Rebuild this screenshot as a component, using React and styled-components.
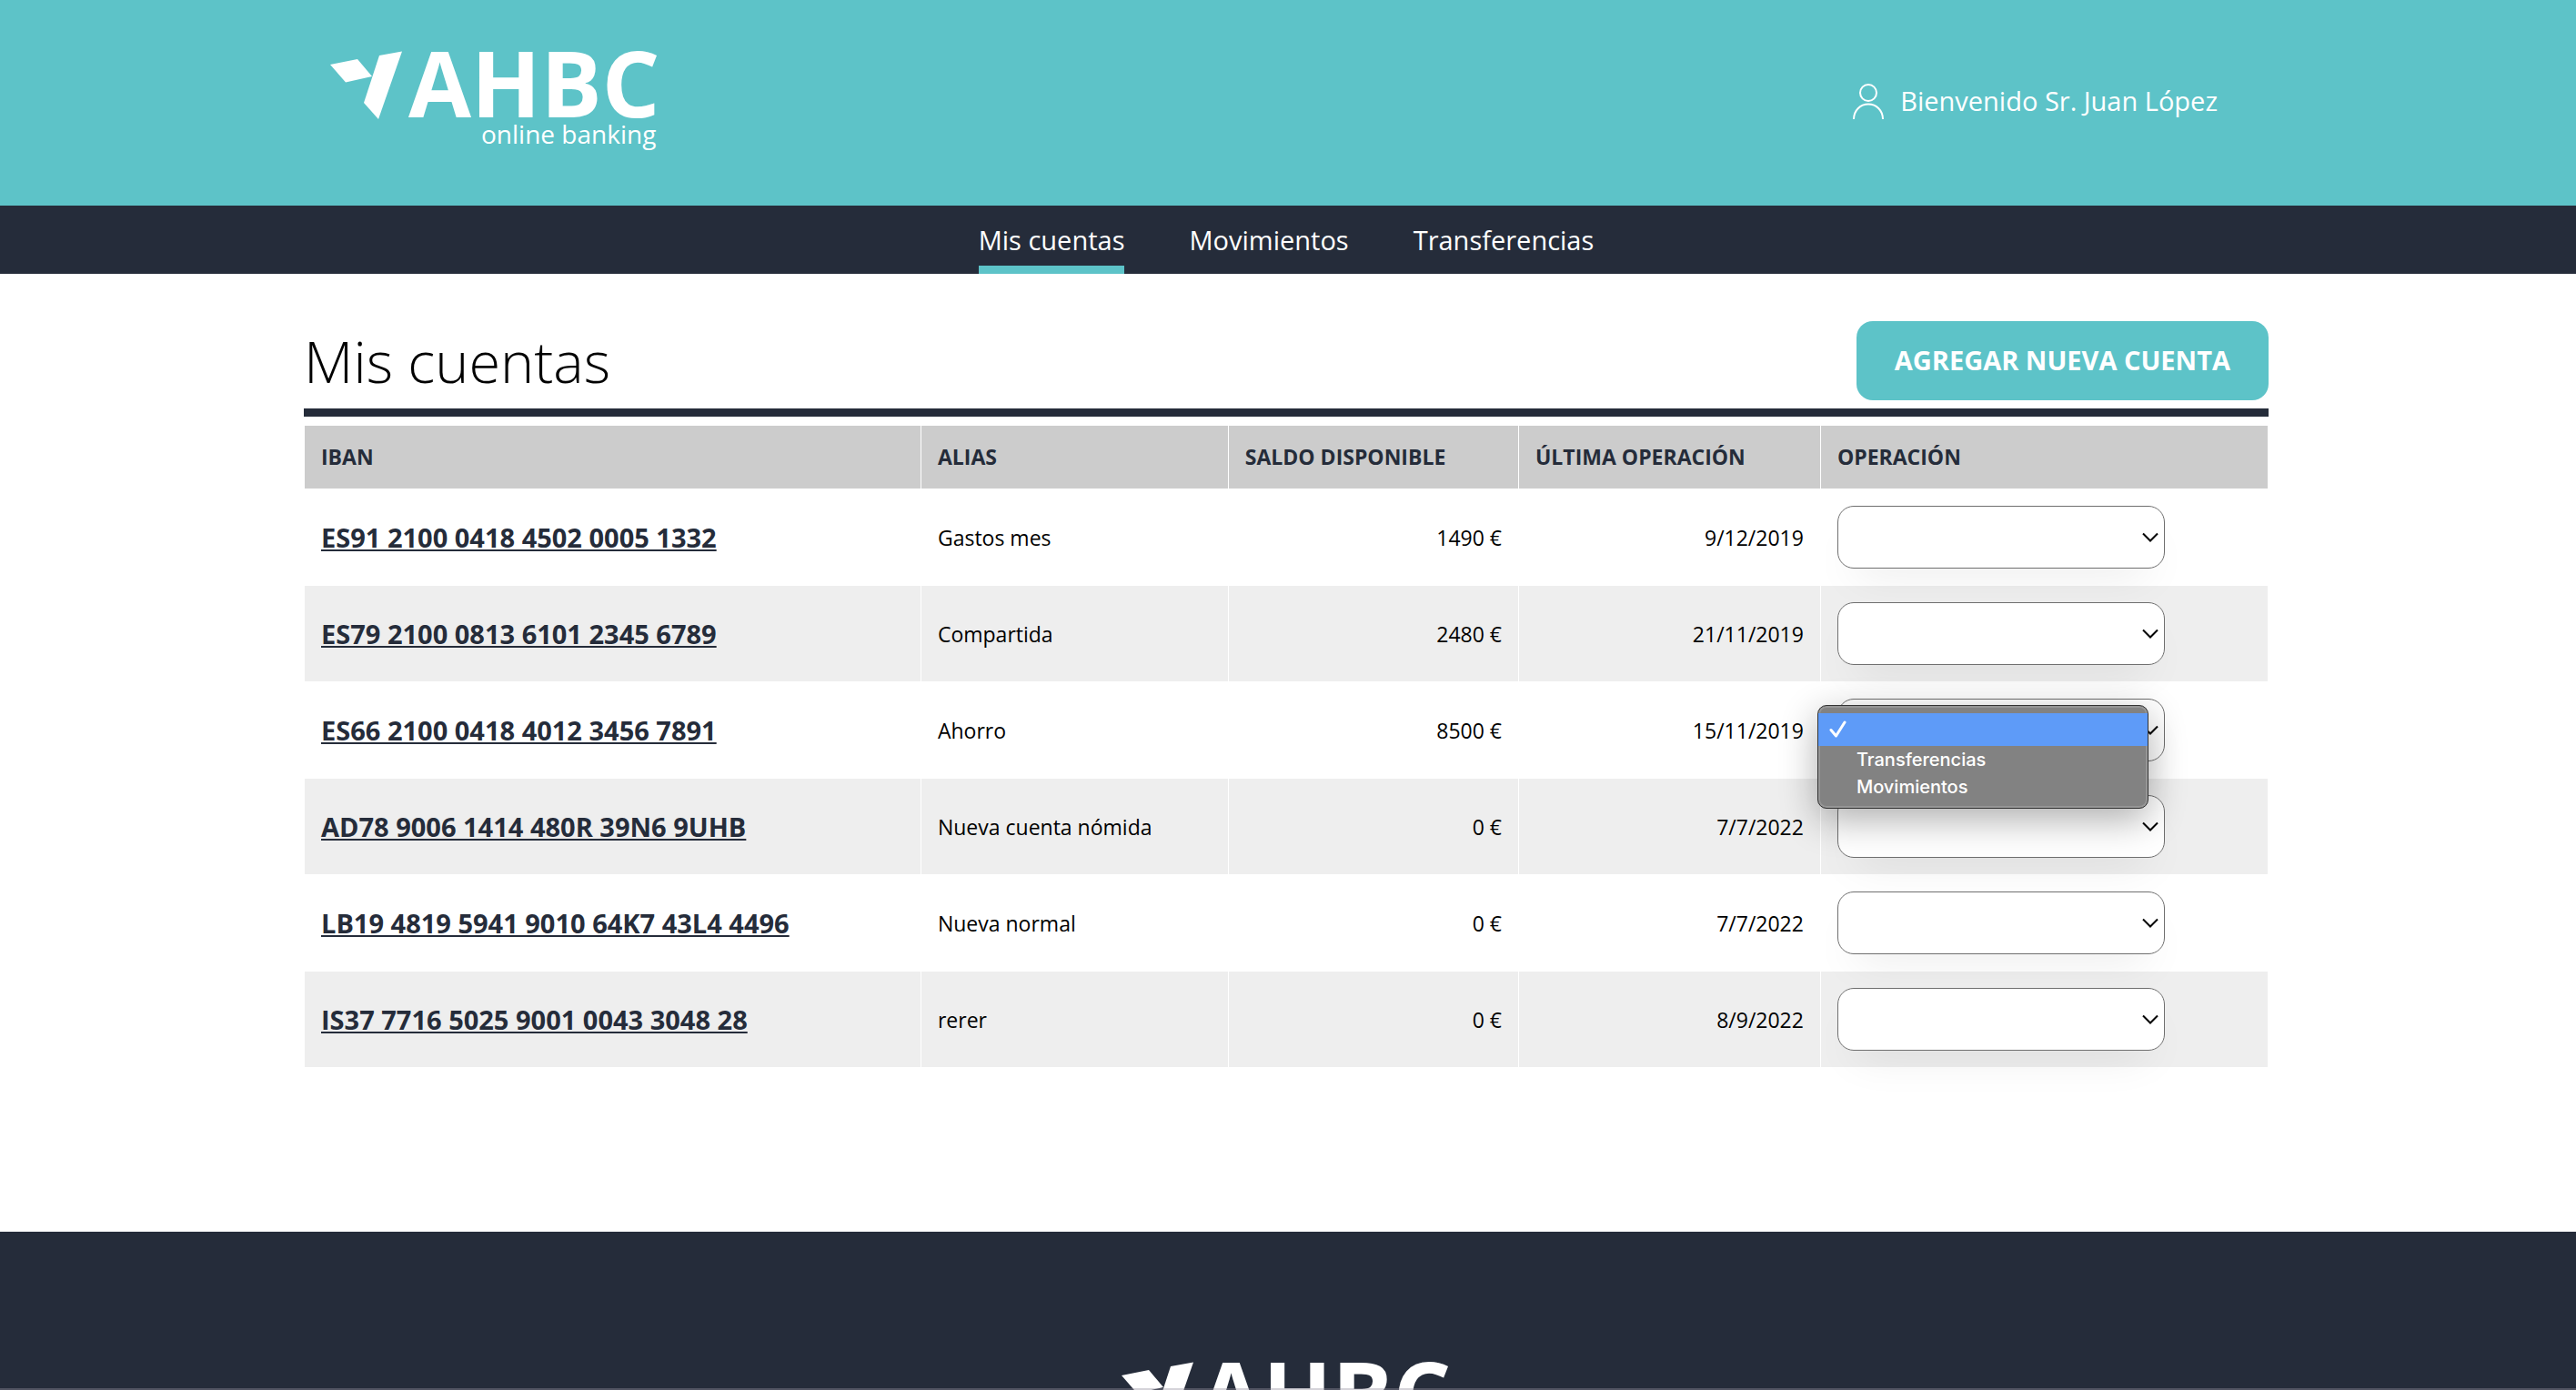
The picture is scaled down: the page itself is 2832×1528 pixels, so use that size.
import React from 'react';
import styled, { createGlobalStyle, css } from 'styled-components';

const teal = '#5dc3c8';
const navy = '#252c3a';

const GlobalStyle = createGlobalStyle`
  *, *::before, *::after { box-sizing: border-box; }
  html { overflow-x: hidden; background: #fff; }
  body {
    margin: 0;
    color: #000;
    font-family: "Open Sans", "Noto Sans", sans-serif;
    font-size: 23px;
  }
`;

const Header = styled.header`
  background: ${teal};
  height: 226px;
  padding-right: 4px;
`;

const HeaderInner = styled.div`
  max-width: 2160px;
  margin: 0 auto;
  padding: 52px 56px 0 28px;
  display: flex;
  justify-content: space-between;
  align-items: flex-start;
`;

const LogoSvg = styled.svg`
  display: block;
  flex: none;
  width: 364px;
  height: 116px;
  overflow: visible;
  fill: #fff;
  font-family: "Open Sans", "Noto Sans", sans-serif;
`;

const User = styled.div`
  display: flex;
  align-items: center;
  gap: 18px;
  padding-top: 38px;
  color: #fff;
  font-size: 29px;
  line-height: 42px;
`;

const UserIcon = styled.svg`
  width: 34px;
  height: 40px;
  fill: none;
  stroke: #fff;
  stroke-width: 2;
`;

const Nav = styled.nav`
  background: ${navy};
  height: 75px;
  padding-right: 4px;
`;

const NavList = styled.ul`
  height: 100%;
  margin: 0;
  padding: 0;
  list-style: none;
  display: flex;
  justify-content: center;
  gap: 71px;
`;

const NavLink = styled.a`
  display: block;
  height: 75px;
  padding-top: 15px;
  color: #fff;
  font-size: 29px;
  line-height: 46px;
  text-decoration: none;
  border-bottom: 9px solid ${(p) => (p.$active ? teal : 'transparent')};
`;

const Main = styled.main`
  max-width: 2164px;
  margin: 0 auto;
  padding: 52px 4px 180px 0;
`;

const TitleBar = styled.div`
  display: flex;
  justify-content: space-between;
  align-items: center;
  padding-bottom: 9px;
  border-bottom: 9px solid ${navy};
`;

const Title = styled.h1`
  margin: 0;
  font-size: 63px;
  font-weight: 300;
  line-height: 87px;
`;

const AddButton = styled.button`
  height: 87px;
  padding: 0 42px 2px;
  border: 0;
  border-radius: 18px;
  background: ${teal};
  color: #fff;
  font: 700 29px "Open Sans", "Noto Sans", sans-serif;
  text-transform: uppercase;
`;

const Table = styled.table`
  width: 100%;
  margin-top: 9px;
  border-collapse: collapse;
`;

const cell = css`
  border: 1px solid #fff;
  padding: 0 18px;
  text-align: ${(p) => (p.$end ? 'right' : 'left')};
`;

const Th = styled.th`
  ${cell}
  height: 70px;
  width: ${(p) => p.$width || 'auto'};
  padding-bottom: 1px;
  background: #ccc;
  color: ${navy};
  font-weight: 700;
`;

const Row = styled.tr`
  &:nth-child(even) { background: #eee; }
`;

const Td = styled.td`
  ${cell}
  height: 106px;
`;

const Iban = styled.a`
  color: ${navy};
  font-size: 29px;
  font-weight: 700;
  text-decoration: underline;
`;

const SelectWrap = styled.div`
  position: relative;
  width: 360px;
`;

const Select = styled.select`
  display: block;
  appearance: none;
  width: 100%;
  height: 69px;
  padding: 0 40px 0 18px;
  border: 1px solid #6f6f6f;
  border-radius: 18px;
  background: #fff;
  box-shadow: 0 24px 48px -20px rgba(0, 0, 0, 0.1);
  color: transparent;
  font: 23px "Open Sans", "Noto Sans", sans-serif;
`;

const Chevron = styled.svg`
  position: absolute;
  right: 7px;
  top: 29px;
  width: 18px;
  height: 11px;
  fill: none;
  stroke: #000;
  stroke-width: 2;
  pointer-events: none;
`;

const Menu = styled.ul`
  position: absolute;
  z-index: 2;
  left: -22px;
  top: 7px;
  width: 364px;
  margin: 0;
  padding: 8px 0;
  list-style: none;
  border: 1px solid #333;
  border-radius: 10px;
  background: #828282;
  box-shadow: inset 0 0 0 2px #969696, 0 12px 40px rgba(0, 0, 0, 0.32);
  color: #fff;
  font: 500 20px/30px Inter, "Liberation Sans", sans-serif;
`;

const MenuItem = styled.li`
  height: ${(p) => (p.$selected ? 36 : 30)}px;
  padding-left: ${(p) => (p.$selected ? 12 : 42)}px;
  background: ${(p) => (p.$selected ? '#5e9bf8' : 'transparent')};
`;

const Check = styled.svg`
  display: block;
  width: 20px;
  height: 36px;
  fill: none;
  stroke: #fff;
  stroke-width: 3;
  stroke-linecap: round;
  stroke-linejoin: round;
`;

const Footer = styled.footer`
  height: 480px;
  padding: 139px 4px 0 0;
  background: ${navy};
  display: flex;
  justify-content: center;
`;

const Viewport = styled.div`
  height: 100vh;
  overflow: hidden;

  &::after {
    content: "";
    position: fixed;
    inset: auto 0 0;
    height: 2px;
    background: rgba(150, 145, 160, 0.4);
  }
`;

const accounts = [
  { iban: 'ES91 2100 0418 4502 0005 1332', alias: 'Gastos mes', balance: '1490 €', date: '9/12/2019' },
  { iban: 'ES79 2100 0813 6101 2345 6789', alias: 'Compartida', balance: '2480 €', date: '21/11/2019' },
  { iban: 'ES66 2100 0418 4012 3456 7891', alias: 'Ahorro', balance: '8500 €', date: '15/11/2019', open: true },
  { iban: 'AD78 9006 1414 480R 39N6 9UHB', alias: 'Nueva cuenta nómida', balance: '0 €', date: '7/7/2022' },
  { iban: 'LB19 4819 5941 9010 64K7 43L4 4496', alias: 'Nueva normal', balance: '0 €', date: '7/7/2022' },
  { iban: 'IS37 7716 5025 9001 0043 3048 28', alias: 'rerer', balance: '0 €', date: '8/9/2022' },
];

function Logo() {
  return (
    <LogoSvg viewBox="0 0 364 116" role="img" aria-label="AHBC online banking">
      <polygon points="1,19 31,13 47,32 18,38.5" />
      <polygon points="55,9 80,4.5 54,79 38,61" />
      <text x="87" y="77" fontSize="100" fontWeight="700">AHBC</text>
      <text x="167" y="106" fontSize="28" fontWeight="400">online banking</text>
    </LogoSvg>
  );
}

function OperationSelect({ iban, open }) {
  return (
    <SelectWrap>
      <Select aria-label={`Operación ${iban}`} defaultValue="">
        <option value="" />
        <option value="transfer">Transferencias</option>
        <option value="moves">Movimientos</option>
      </Select>
      <Chevron viewBox="0 0 18 11" aria-hidden="true">
        <path d="M1 1.5 9 9.5 17 1.5" />
      </Chevron>
      {open && (
        <Menu>
          <MenuItem $selected>
            <Check viewBox="0 0 20 36" aria-hidden="true">
              <path d="M2 18.5 7.500 25 17 10" />
            </Check>
          </MenuItem>
          <MenuItem>Transferencias</MenuItem>
          <MenuItem>Movimientos</MenuItem>
        </Menu>
      )}
    </SelectWrap>
  );
}

export default function App() {
  return (
    <Viewport>
      <GlobalStyle />
      <Header>
        <HeaderInner>
          <Logo />
          <User>
            <UserIcon viewBox="0 0 34 40" aria-hidden="true">
              <circle cx="17" cy="11" r="9" />
              <path d="M1 40C1 30.500 8 23.500 17 23.500S33 30.500 33 40" />
            </UserIcon>
            <span>Bienvenido Sr. Juan López</span>
          </User>
        </HeaderInner>
      </Header>
      <Nav>
        <NavList>
          <li><NavLink href="#cuentas" $active>Mis cuentas</NavLink></li>
          <li><NavLink href="#movimientos">Movimientos</NavLink></li>
          <li><NavLink href="#transferencias">Transferencias</NavLink></li>
        </NavList>
      </Nav>
      <Main>
        <TitleBar>
          <Title>Mis cuentas</Title>
          <AddButton type="button">Agregar nueva cuenta</AddButton>
        </TitleBar>
        <Table>
          <thead>
            <tr>
              <Th $width="31.4%">IBAN</Th>
              <Th>ALIAS</Th>
              <Th>SALDO DISPONIBLE</Th>
              <Th>ÚLTIMA OPERACIÓN</Th>
              <Th>OPERACIÓN</Th>
            </tr>
          </thead>
          <tbody>
            {accounts.map((a) => (
              <Row key={a.iban}>
                <Td><Iban href="#movimientos">{a.iban}</Iban></Td>
                <Td>{a.alias}</Td>
                <Td $end>{a.balance}</Td>
                <Td $end>{a.date}</Td>
                <Td><OperationSelect iban={a.iban} open={a.open} /></Td>
              </Row>
            ))}
          </tbody>
        </Table>
      </Main>
      <Footer>
        <Logo />
      </Footer>
    </Viewport>
  );
}
